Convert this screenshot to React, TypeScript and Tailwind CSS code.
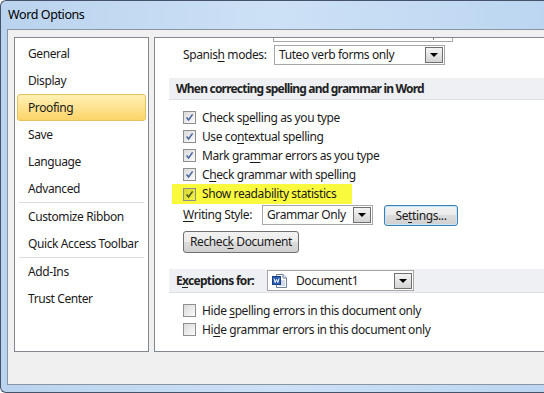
import React from "react";

function Key({ children }: { children: React.ReactNode }) {
  return <span className="underline decoration-1 underline-offset-[2px]">{children}</span>;
}

function Arrow() {
  return (
    <span className="flex h-[16px] w-[18px] shrink-0 items-center justify-center border border-[#707070] bg-gradient-to-b from-[#f4f4f4] to-[#d4d4d4]">
      <span className="h-0 w-0 border-x-[4px] border-t-[4px] border-x-transparent border-t-black" />
    </span>
  );
}

function Combo({ className = "", children }: { className?: string; children: React.ReactNode }) {
  return (
    <div className={`flex items-center justify-between border border-[#a7a7a7] bg-white pl-[4px] pr-px ${className}`}>
      <span className="flex items-center gap-[8px] whitespace-nowrap">{children}</span>
      <Arrow />
    </div>
  );
}

function Box({ checked, hl }: { checked?: boolean; hl?: boolean }) {
  return (
    <span
      className={`flex h-[13px] w-[13px] shrink-0 items-center justify-center border border-[#8e8f8f] ${
        hl ? "bg-gradient-to-br from-[#d6d63a] to-[#f2f240]" : "bg-gradient-to-br from-[#dadada] to-[#fbfbfb]"
      }`}
    >
      {checked && (
        <svg width="9" height="9" viewBox="0 0 9 9">
          <path d="M1.6 4.4 L3.6 7 L7.6 1.4" fill="none" stroke={hl ? "#4a5220" : "#4b66a0"} strokeWidth="1.6" />
        </svg>
      )}
    </span>
  );
}

function Row({ checked, children }: { checked?: boolean; children: React.ReactNode }) {
  return (
    <div className="flex h-[19px] items-center gap-[6px] pl-[28px]">
      <Box checked={checked} />
      <span className="whitespace-nowrap">{children}</span>
    </div>
  );
}

function WordIcon() {
  return (
    <svg width="16" height="16" viewBox="0 0 16 16" className="shrink-0">
      <path d="M4.5 1.5 H11 L14.5 5 V14.5 H4.5 Z" fill="#fff" stroke="#6d7f99" />
      <path d="M11 1.5 V5 H14.5" fill="#e4ebf4" stroke="#6d7f99" />
      <path d="M7 8 H13 M7 10 H13 M7 12 H13" stroke="#9fb3cf" />
      <rect x="0.5" y="3.5" width="8" height="8" fill="#2b5fb4" stroke="#1b3f82" />
      <path d="M2 5.5 L3.2 9.5 L4.5 6.5 L5.8 9.5 L7 5.5" fill="none" stroke="#fff" strokeWidth="1" />
    </svg>
  );
}

const nav = ["General", "Display", "Proofing", "Save", "Language", "Advanced", "-", "Customize Ribbon", "Quick Access Toolbar", "-", "Add-Ins", "Trust Center"];

const btn =
  "flex items-center justify-center rounded-[3px] border bg-[linear-gradient(#f2f2f2,#ebebeb_50%,#dddddd_50%,#cfcfcf)] whitespace-nowrap";

export default function App() {
  return (
    <div className="h-[393px] w-[544px] overflow-hidden bg-white font-['Noto_Sans',sans-serif] text-[12px] tracking-[-0.4px] text-[#1b1b1b]">
      <div className="flex h-full flex-col rounded-l-[6px] border-y border-l border-[#45536a] bg-gradient-to-r from-[#bad3ee] via-[#cde1f6] to-[#bcd6f1] pb-[7px] pl-[6px]">
        <div className="flex h-[28px] items-center pl-px text-[12.5px] text-black">Word Options</div>

        <div className="flex flex-1 border-y border-l border-[#8a95a3] bg-[#f0f0f0] pb-[32px] pl-[6px] pt-[7px]">
          {/* left navigation */}
          <div className="flex w-[135px] shrink-0 flex-col border border-[#828790] bg-white pt-[2px]">
            {nav.map((item, i) =>
              item === "-" ? (
                <div key={i} className="mx-[4px] h-px bg-[#dcdcdc]" />
              ) : (
                <div
                  key={i}
                  className={`mx-[2px] flex h-[27px] items-center rounded-[3px] border pl-[10px] ${
                    item === "Proofing"
                      ? "border-[#e5c160] bg-gradient-to-b from-[#fff1b4] to-[#fdd468]"
                      : "border-transparent"
                  }`}
                >
                  {item}
                </div>
              )
            )}
          </div>

          {/* content */}
          <div className="ml-[5px] flex flex-1 flex-col border-y border-l border-[#828790] bg-white">
            <div className="ml-[118px] flex h-[4px] w-[180px] justify-end border-x border-b border-[#a7a7a7]">
              <span className="mr-[18px] h-[2px] w-px bg-[#8a8a8a]" />
            </div>

            <div className="mt-[3px] flex h-[20px] items-center pl-[28px]">
              <span className="w-[91px]">
                Spanis<Key>h</Key> modes:
              </span>
              <Combo className="h-[20px] w-[171px]">Tuteo verb forms only</Combo>
            </div>

            <div className="ml-[14px] mt-[13px] flex h-[22px] items-center border-b border-[#dde0e6] bg-[#eef0f4] pl-[7px] font-bold tracking-[-0.8px] text-[#222]">
              When correcting spelling and grammar in Word
            </div>

            <div className="mt-[8px] flex flex-col">
              <Row checked>
                Check s<Key>p</Key>elling as you type
              </Row>
              <Row checked>
                Use co<Key>n</Key>textual spelling
              </Row>
              <Row checked>
                Mark gra<Key>m</Key>mar errors as you type
              </Row>
              <Row checked>
                C<Key>h</Key>eck grammar with spelling
              </Row>
              <div className="ml-[17px] flex h-[20px] w-[180px] items-center gap-[6px] bg-[#f9f93e] pl-[11px]">
                <Box checked hl />
                <span className="whitespace-nowrap">
                  Show readabi<Key>l</Key>ity statistics
                </span>
              </div>
            </div>

            <div className="mt-px flex h-[21px] items-start pl-[28px]">
              <span className="flex h-[20px] w-[79px] items-center">
                <span>
                  <Key>W</Key>riting Style:
                </span>
              </span>
              <Combo className="h-[20px] w-[111px]">Grammar Only</Combo>
              <div className={`${btn} ml-[11px] h-[21px] w-[74px] border-[#3c7fb1] shadow-[inset_0_0_0_1px_#c6e6fa]`}>
                <span>
                  Se<Key>t</Key>tings...
                </span>
              </div>
            </div>

            <div className="ml-[28px] mt-[5px] flex">
              <div className={`${btn} h-[22px] w-[116px] border-[#707070]`}>
                <span>
                  Rechec<Key>k</Key> Document
                </span>
              </div>
            </div>

            <div className="ml-[14px] mt-[16px] flex h-[24px] items-start border-b border-[#dde0e6] bg-[#eef0f4] pl-[7px] pt-px">
              <span className="flex h-[21px] w-[91px] items-center font-bold tracking-[-0.7px] text-[#222]">
                <span>
                  E<Key>x</Key>ceptions for:
                </span>
              </span>
              <Combo className="h-[21px] w-[147px]">
                <WordIcon />
                <span>Document1</span>
              </Combo>
            </div>

            <div className="mt-[8px] flex flex-col">
              <Row>
                Hide <Key>s</Key>pelling errors in this document only
              </Row>
              <Row>
                Hi<Key>d</Key>e grammar errors in this document only
              </Row>
            </div>
          </div>
        </div>
      </div>
    </div>
  );
}
